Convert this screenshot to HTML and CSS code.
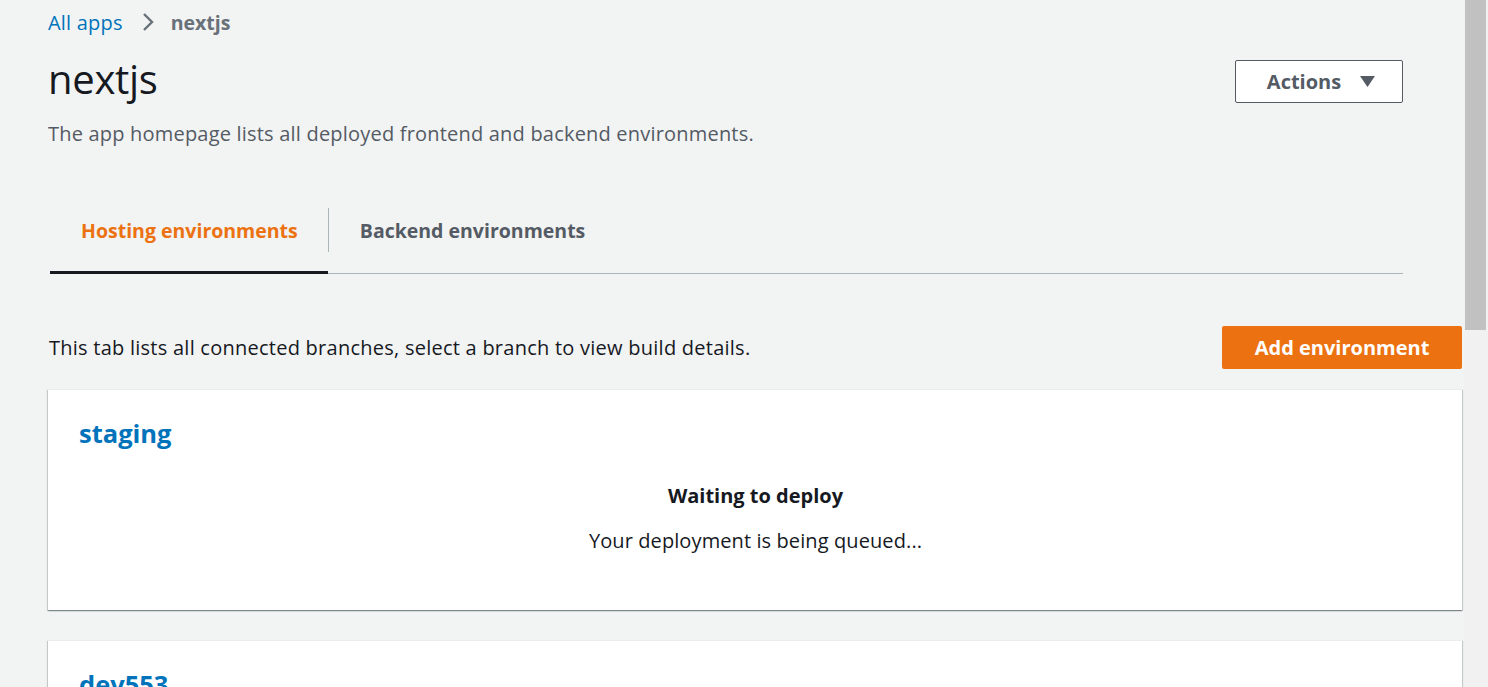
FILE: index.html
```html
<!DOCTYPE html>
<html lang="en">
<head>
<meta charset="utf-8">
<title>nextjs</title>
<link rel="stylesheet" href="styles.css">
</head>
<body>
<div class="shell">
  <main class="page">
    <nav class="crumbs">
      <a class="crumb-link" href="#">All apps</a>
      <svg class="crumb-sep" width="14" height="20" viewBox="0 0 14 20"><path d="M3 2 L11 10 L3 18" fill="none" stroke="#687078" stroke-width="2.4"/></svg>
      <span class="crumb-current">nextjs</span>
    </nav>

    <header class="head">
      <div class="head-text">
        <h1 class="title">nextjs</h1>
        <p class="subtitle">The app homepage lists all deployed frontend and backend environments.</p>
      </div>
      <button class="btn-actions">Actions <svg class="caret" width="15" height="11" viewBox="0 0 15 11"><path d="M0 0 H15 L7.5 11 Z" fill="#545b64"/></svg></button>
    </header>

    <div class="tabs">
      <div class="tab tab-active">Hosting environments</div>
      <div class="tab-divider"></div>
      <div class="tab">Backend environments</div>
    </div>

    <section class="env-section">
      <div class="env-bar">
        <p class="env-hint">This tab lists all connected branches, select a branch to view build details.</p>
        <button class="btn-primary">Add environment</button>
      </div>

      <div class="card">
        <a class="card-title" href="#">staging</a>
        <div class="card-status">
          <div class="status-head">Waiting to deploy</div>
          <div class="status-text">Your deployment is being queued...</div>
        </div>
      </div>

      <div class="card">
        <a class="card-title" href="#">dev553</a>
      </div>
    </section>
  </main>
  <div class="scrollbar"><div class="thumb"></div></div>
</div>
</body>
</html>
```
FILE: styles.css
```css
* { box-sizing: border-box; }
html, body { margin: 0; padding: 0; height: 100%; overflow: hidden; }
body {
  background: #f2f3f3;
  font-family: "Open Sans", "Noto Sans", Arial, sans-serif;
  color: #16191f;
}
.shell { display: flex; height: 687px; }
.page { flex: 1; min-width: 0; padding: 0 2px 0 48px; overflow: hidden; }
.scrollbar { width: 24px; background: #f1f1f1; padding: 0 2px 0 1px; }
.thumb { height: 330px; background: #c1c1c1; }

.crumbs { display: flex; align-items: center; height: 44px; font-size: 20px; }
.crumb-link { color: #0073bb; text-decoration: none; letter-spacing: 0.2px; }
.crumb-sep { margin: 0 16px 0 18px; }
.crumb-current { color: #687078; font-weight: 700; font-size: 19.5px; }

.head { display: flex; justify-content: space-between; align-items: flex-start; padding-right: 59px; }
.title { margin: 11px 0 0 0; font-size: 40px; font-weight: 400; line-height: 48px; color: #16191f; letter-spacing: -0.3px; }
.subtitle { margin: 18px 0 0 0; font-size: 20px; line-height: 26px; color: #545b64; letter-spacing: 0.2px; }
.btn-actions {
  margin-top: 16px; width: 168px; height: 43px; background: #fff; border: 1px solid #545b64; border-radius: 2px;
  font-family: inherit; font-size: 20px; font-weight: 700; color: #545b64;
  display: flex; align-items: center; justify-content: center; gap: 19px; padding: 0 0 0 4px;
}

.tabs { display: flex; align-items: stretch; margin: 61px 59px 0 2px; border-bottom: 1px solid #aab7b8; height: 66px; }
.tab { padding: 9px 30px 0 31px; font-size: 19.5px; font-weight: 700; color: #545b64; display: flex; align-items: flex-start; }
.tab-active { color: #ec7211; border-bottom: 3px solid #16191f; margin-bottom: -1px; }
.tab-divider { width: 1px; background: #aab7b8; height: 44px; }

.env-section { padding-top: 52px; }
.env-bar { display: flex; justify-content: space-between; align-items: center; margin-left: 1px; }
.env-hint { margin: 0; font-size: 20px; color: #16191f; letter-spacing: 0.25px; }
.btn-primary {
  width: 240px; height: 43px; background: #ec7211; color: #fff; border: none; border-radius: 2px;
  font-family: inherit; font-size: 20px; font-weight: 700;
}
.card {
  background: #fff; margin-top: 20px; padding: 27px 30px 55px 31px;
  box-shadow: 0 1px 1px 0 rgba(0,28,36,0.3), 1px 1px 1px 0 rgba(0,28,36,0.15), -1px 1px 1px 0 rgba(0,28,36,0.15);
  border-top: 1px solid #eaeded;
}
.card + .card { margin-top: 30px; }
.card-title { display: block; color: #0073bb; font-size: 25.5px; font-weight: 700; text-decoration: none; line-height: 32px; }
.card-status { text-align: center; margin-top: 33px; }
.status-head { font-size: 20px; font-weight: 700; line-height: 28px; }
.status-text { font-size: 20px; line-height: 28px; margin-top: 17px; letter-spacing: 0.1px; }
```
